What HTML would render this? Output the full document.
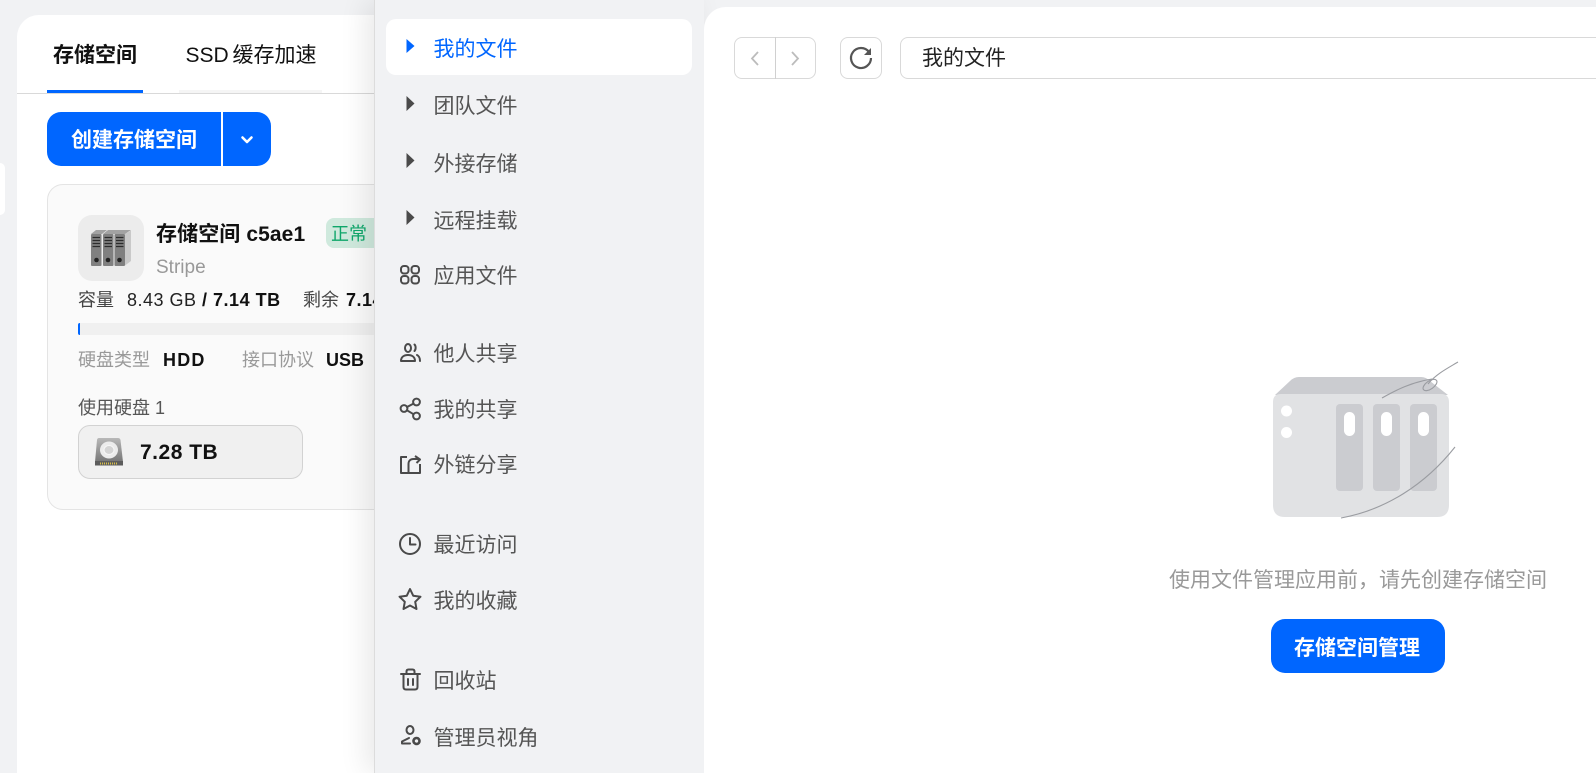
<!DOCTYPE html>
<html lang="zh-CN">
<head>
<meta charset="utf-8">
<title>存储空间</title>
<style>
html,body{margin:0;padding:0;width:1596px;height:773px;overflow:hidden;background:#f1f2f4}
body{position:relative;font-family:"Liberation Sans","Noto Sans CJK SC",sans-serif;color:#111}
.a{position:absolute;box-sizing:border-box}
.t{position:absolute;white-space:nowrap;line-height:30px;height:30px}
.n{font-size:21px;color:#555;left:433.500px}
b{font-weight:700}
svg{position:absolute;left:0;top:0}
</style>
</head>
<body>
<!-- left page -->
<div class="a" style="left:0;top:163px;width:5px;height:52px;background:#fff;border-radius:0 6px 6px 0"></div>
<div class="a" style="left:17px;top:15px;width:400px;height:780px;background:#fff;border-radius:22px 0 0 0"></div>
<div class="a" style="left:17px;top:93px;width:360px;height:1px;background:#d9d9d9"></div>
<div class="a" style="left:47px;top:90px;width:96px;height:3px;background:#0066ff"></div>
<div class="a" style="left:179px;top:90px;width:143px;height:3px;background:#f5f5f5"></div>
<div class="t" style="left:53px;top:41px;font-size:21px;font-weight:700;color:#111">存储空间</div>
<div class="t" style="left:185.500px;top:41px;font-size:21px;color:#111;word-spacing:-2px">SSD 缓存加速</div>

<div class="a" style="left:47px;top:112px;width:174px;height:54px;background:#0066ff;border-radius:14px 0 0 14px"></div>
<div class="a" style="left:223px;top:112px;width:48px;height:54px;background:#0066ff;border-radius:0 14px 14px 0"></div>
<div class="t" style="left:71px;top:126px;font-size:21px;font-weight:700;color:#fff">创建存储空间</div>

<div class="a" style="left:47px;top:184px;width:380px;height:326px;background:#fafafa;border:1px solid #e4e4e4;border-radius:16px"></div>
<div class="a" style="left:78px;top:215px;width:66px;height:66px;background:#ececec;border-radius:14px"></div>
<div class="t" style="left:156px;top:220px;font-size:21px;font-weight:700;color:#111;letter-spacing:.1px">存储空间 c5ae1</div>
<div class="a" style="left:326px;top:218px;width:60px;height:30px;background:#cfe9dd;border-radius:8px"></div>
<div class="t" style="left:331px;top:219px;font-size:18px;color:#0ea66a">正常</div>
<div class="t" style="left:156px;top:253px;font-size:19px;color:#999">Stripe</div>
<div class="t" style="left:78px;top:285px;font-size:18px;color:#444">容量</div>
<div class="t" style="left:127px;top:285px;font-size:18px;color:#222;letter-spacing:.5px">8.43 GB <b style="color:#111">/ 7.14 TB</b></div>
<div class="t" style="left:303px;top:285px;font-size:18px;color:#444">剩余</div>
<div class="t" style="left:346px;top:285px;font-size:18px;font-weight:700;color:#111;letter-spacing:.5px">7.14</div>
<div class="a" style="left:78px;top:323px;width:340px;height:12px;background:#f0f0f0"></div>
<div class="a" style="left:78px;top:323px;width:2px;height:12px;background:#0066ff;border-radius:2px 0 0 2px"></div>
<div class="t" style="left:78px;top:345px;font-size:18px;color:#999">硬盘类型</div>
<div class="t" style="left:163px;top:345px;font-size:18px;font-weight:700;color:#111;letter-spacing:1.200px">HDD</div>
<div class="t" style="left:242px;top:345px;font-size:18px;color:#999">接口协议</div>
<div class="t" style="left:326px;top:345px;font-size:18px;font-weight:700;color:#111">USB</div>
<div class="t" style="left:78px;top:393px;font-size:18px;color:#555">使用硬盘 1</div>
<div class="a" style="left:78px;top:425px;width:225px;height:54px;background:#f0f0f0;border:1px solid #d2d2d2;border-radius:12px"></div>
<div class="t" style="left:140px;top:438px;font-size:21px;font-weight:700;color:#111;letter-spacing:.5px">7.28 TB</div>

<!-- sidebar -->
<div class="a" style="left:374px;top:0;width:330px;height:773px;background:#f1f2f4;border-left:1px solid #dcdcdc;box-shadow:-8px 0 26px rgba(0,0,0,.09)"></div>
<div class="a" style="left:386px;top:19px;width:306px;height:56px;background:#fff;border-radius:10px"></div>
<div class="t n" style="top:35px;color:#0066ff">我的文件</div>
<div class="t n" style="top:92px">团队文件</div>
<div class="t n" style="top:150px">外接存储</div>
<div class="t n" style="top:207px">远程挂载</div>
<div class="t n" style="top:262px">应用文件</div>
<div class="t n" style="top:340px">他人共享</div>
<div class="t n" style="top:396px">我的共享</div>
<div class="t n" style="top:451px">外链分享</div>
<div class="t n" style="top:531px">最近访问</div>
<div class="t n" style="top:587px">我的收藏</div>
<div class="t n" style="top:667px">回收站</div>
<div class="t n" style="top:724px">管理员视角</div>

<!-- main -->
<div class="a" style="left:704px;top:7px;width:900px;height:780px;background:#fff;border-radius:22px 0 0 0"></div>
<div class="a" style="left:734px;top:37px;width:82px;height:42px;border:1px solid #d9d9d9;border-radius:8px"></div>
<div class="a" style="left:775px;top:37px;width:1px;height:42px;background:#d0d0d0"></div>
<div class="a" style="left:840px;top:37px;width:42px;height:42px;border:1px solid #d9d9d9;border-radius:8px"></div>
<div class="a" style="left:900px;top:37px;width:720px;height:42px;border:1px solid #d9d9d9;border-radius:8px"></div>
<div class="t" style="left:922px;top:44px;font-size:21px;color:#222">我的文件</div>
<div class="t" style="left:1169px;top:566px;font-size:21px;color:#999">使用文件管理应用前，请先创建存储空间</div>
<div class="a" style="left:1271px;top:619px;width:174px;height:54px;background:#0066ff;border-radius:14px"></div>
<div class="t" style="left:1294px;top:634px;font-size:21px;font-weight:700;color:#fff">存储空间管理</div>

<svg width="1596" height="773" viewBox="0 0 1596 773" fill="none">
<!-- button chevron -->
<path d="M242.500 137.500l4.500 4.500 4.500-4.500" stroke="#fff" stroke-width="2.600" stroke-linecap="round" stroke-linejoin="round"/>
<!-- storage binders -->
<path d="M125 234l6-3.500V261l-6 4.500z" fill="#c9c9c9"/>
<path d="M91 234l5-4h11l-5 4zM103 234l5-4h11l-5 4zM114 234l5-4h12l-6 4z" fill="#a2a2a2"/>
<rect x="91" y="234" width="10.500" height="32" rx="1" fill="#808080"/>
<rect x="103" y="234" width="10.500" height="32" rx="1" fill="#808080"/>
<rect x="114.500" y="234" width="10.500" height="32" rx="1" fill="#808080"/>
<path d="M92.500 237.500h7.500M92.500 240.500h7.500M92.500 243.500h7.500M92.500 246.500h7.500M104.500 237.500h7.500M104.500 240.500h7.500M104.500 243.500h7.500M104.500 246.500h7.500M116 237.500h7.500M116 240.500h7.500M116 243.500h7.500M116 246.500h7.500" stroke="#2c2c2c" stroke-width="1.300"/>
<circle cx="96.500" cy="260" r="2.300" fill="#222"/><circle cx="108" cy="260" r="2.300" fill="#222"/><circle cx="119.500" cy="260" r="2.300" fill="#222"/>
<!-- disk icon -->
<defs><linearGradient id="dg" x1="0" y1="0" x2="0" y2="1"><stop offset="0" stop-color="#b8b8b8"/><stop offset="1" stop-color="#767676"/></linearGradient></defs>
<path d="M99 438h19q2 0 2.500 2l2.500 22H95l2-22q.3-2 2-2z" fill="url(#dg)"/>
<rect x="95" y="461" width="28" height="4.500" fill="#5c5c5c"/>
<path d="M100 463.500h18" stroke="#d9bf4a" stroke-width="2" stroke-dasharray="1 1"/>
<ellipse cx="109" cy="450" rx="9" ry="8.500" fill="#ececec"/>
<ellipse cx="109" cy="450" rx="5" ry="4.500" fill="#d4d4d4" stroke="#f7f7f7"/>
<!-- triangles -->
<path d="M406.500 39l8 7-8 7z" fill="#0066ff"/>
<path d="M406.500 96l8 7.500-8 7.500zM406.500 153l8 7.500-8 7.500zM406.500 210l8 7.500-8 7.500z" fill="#4a4a4a"/>
<g stroke="#4a4a4a" stroke-width="2" stroke-linecap="round" stroke-linejoin="round">
<!-- apps -->
<rect x="401" y="266" width="7.500" height="7.500" rx="3"/>
<rect x="411.500" y="266" width="7.500" height="7.500" rx="3"/>
<rect x="401" y="276" width="7.500" height="7.500" rx="3"/>
<rect x="411.500" y="276" width="7.500" height="7.500" rx="3"/>
<!-- users -->
<ellipse cx="408" cy="348" rx="3" ry="4"/>
<path d="M401 361c0-4 3-6 7-6s7 2 7 6zM414.500 344.500c1.500 1.500 1.500 5 0 6.500M417 355c2 1 3 3 3 6"/>
<!-- share -->
<circle cx="404" cy="408.500" r="3.400"/><circle cx="416.500" cy="402" r="3.400"/><circle cx="416.500" cy="416" r="3.400"/>
<path d="M407 407l6.500-3.400M407 410.300l6.500 3.900"/>
<!-- link share -->
<path d="M407 457h-6v16h19v-9M408.500 472v-8c0-3 2-5 5-5h5M415 456l5 3.500-3.500 3.500" stroke-linecap="butt"/>
<!-- clock -->
<circle cx="410" cy="544" r="10"/>
<path d="M410 538v6.500h5.500"/>
<!-- star -->
<path d="M410 589l3.200 6.700 7.300 1-5.300 5.100 1.300 7.200-6.500-3.500-6.500 3.500 1.300-7.200-5.300-5.100 7.300-1z"/>
<!-- trash -->
<path d="M401 674h19M406.500 674v-2.500q0-2 2-2h4q2 0 2 2v2.500M403.500 674v13q0 2.500 2.500 2.500h9q2.500 0 2.500-2.500v-13M408 679v6M413 679v6"/>
<!-- admin -->
<ellipse cx="410" cy="730" rx="3.500" ry="4"/>
<path d="M409 738l-7 3.500v2h8"/>
<circle cx="416.500" cy="741" r="3" stroke-width="2.600" stroke-dasharray="2 .6"/>
</g>
<!-- nav -->
<path d="M758 52l-6 6.500 6 6.500M792 52l6 6.500-6 6.500" stroke="#bcbcbc" stroke-width="1.800"/>
<path d="M869 52a10 10 0 1 0 2 6" stroke="#555" stroke-width="2.200"/>
<path d="M871 48v7h-7z" fill="#555"/>
<!-- illustration -->
<path d="M1275 395l15-14q4-4 9-4h122q5 0 9 4l18 14z" fill="#cbccd0"/>
<path d="M1273 402q0-8 8-8h160q8 0 8 8v103q0 12-12 12h-152q-12 0-12-12z" fill="#e1e2e4"/>
<circle cx="1286.500" cy="411" r="5.500" fill="#fff"/><circle cx="1286.500" cy="432.500" r="5.500" fill="#fff"/>
<rect x="1336" y="404" width="27" height="87" rx="4" fill="#cbccd0"/>
<rect x="1373" y="404" width="27" height="87" rx="4" fill="#cbccd0"/>
<rect x="1410" y="404" width="27" height="87" rx="4" fill="#cbccd0"/>
<rect x="1344" y="412" width="11" height="24" rx="5.500" fill="#fff"/>
<rect x="1381" y="412" width="11" height="24" rx="5.500" fill="#fff"/>
<rect x="1418" y="412" width="11" height="24" rx="5.500" fill="#fff"/>
<path d="M1382 398C1396 390 1412 382 1432 379M1428 384C1436 374 1448 368 1458 362" stroke="#9a9ca1" stroke-width="1.100"/>
<ellipse cx="1430" cy="385" rx="8" ry="4" transform="rotate(-35 1430 385)" stroke="#9a9ca1" stroke-width="1.100"/>
<path d="M1341 518C1385 510 1425 485 1455 447" stroke="#9a9ca1" stroke-width="1.100"/>
</svg>
</body>
</html>
